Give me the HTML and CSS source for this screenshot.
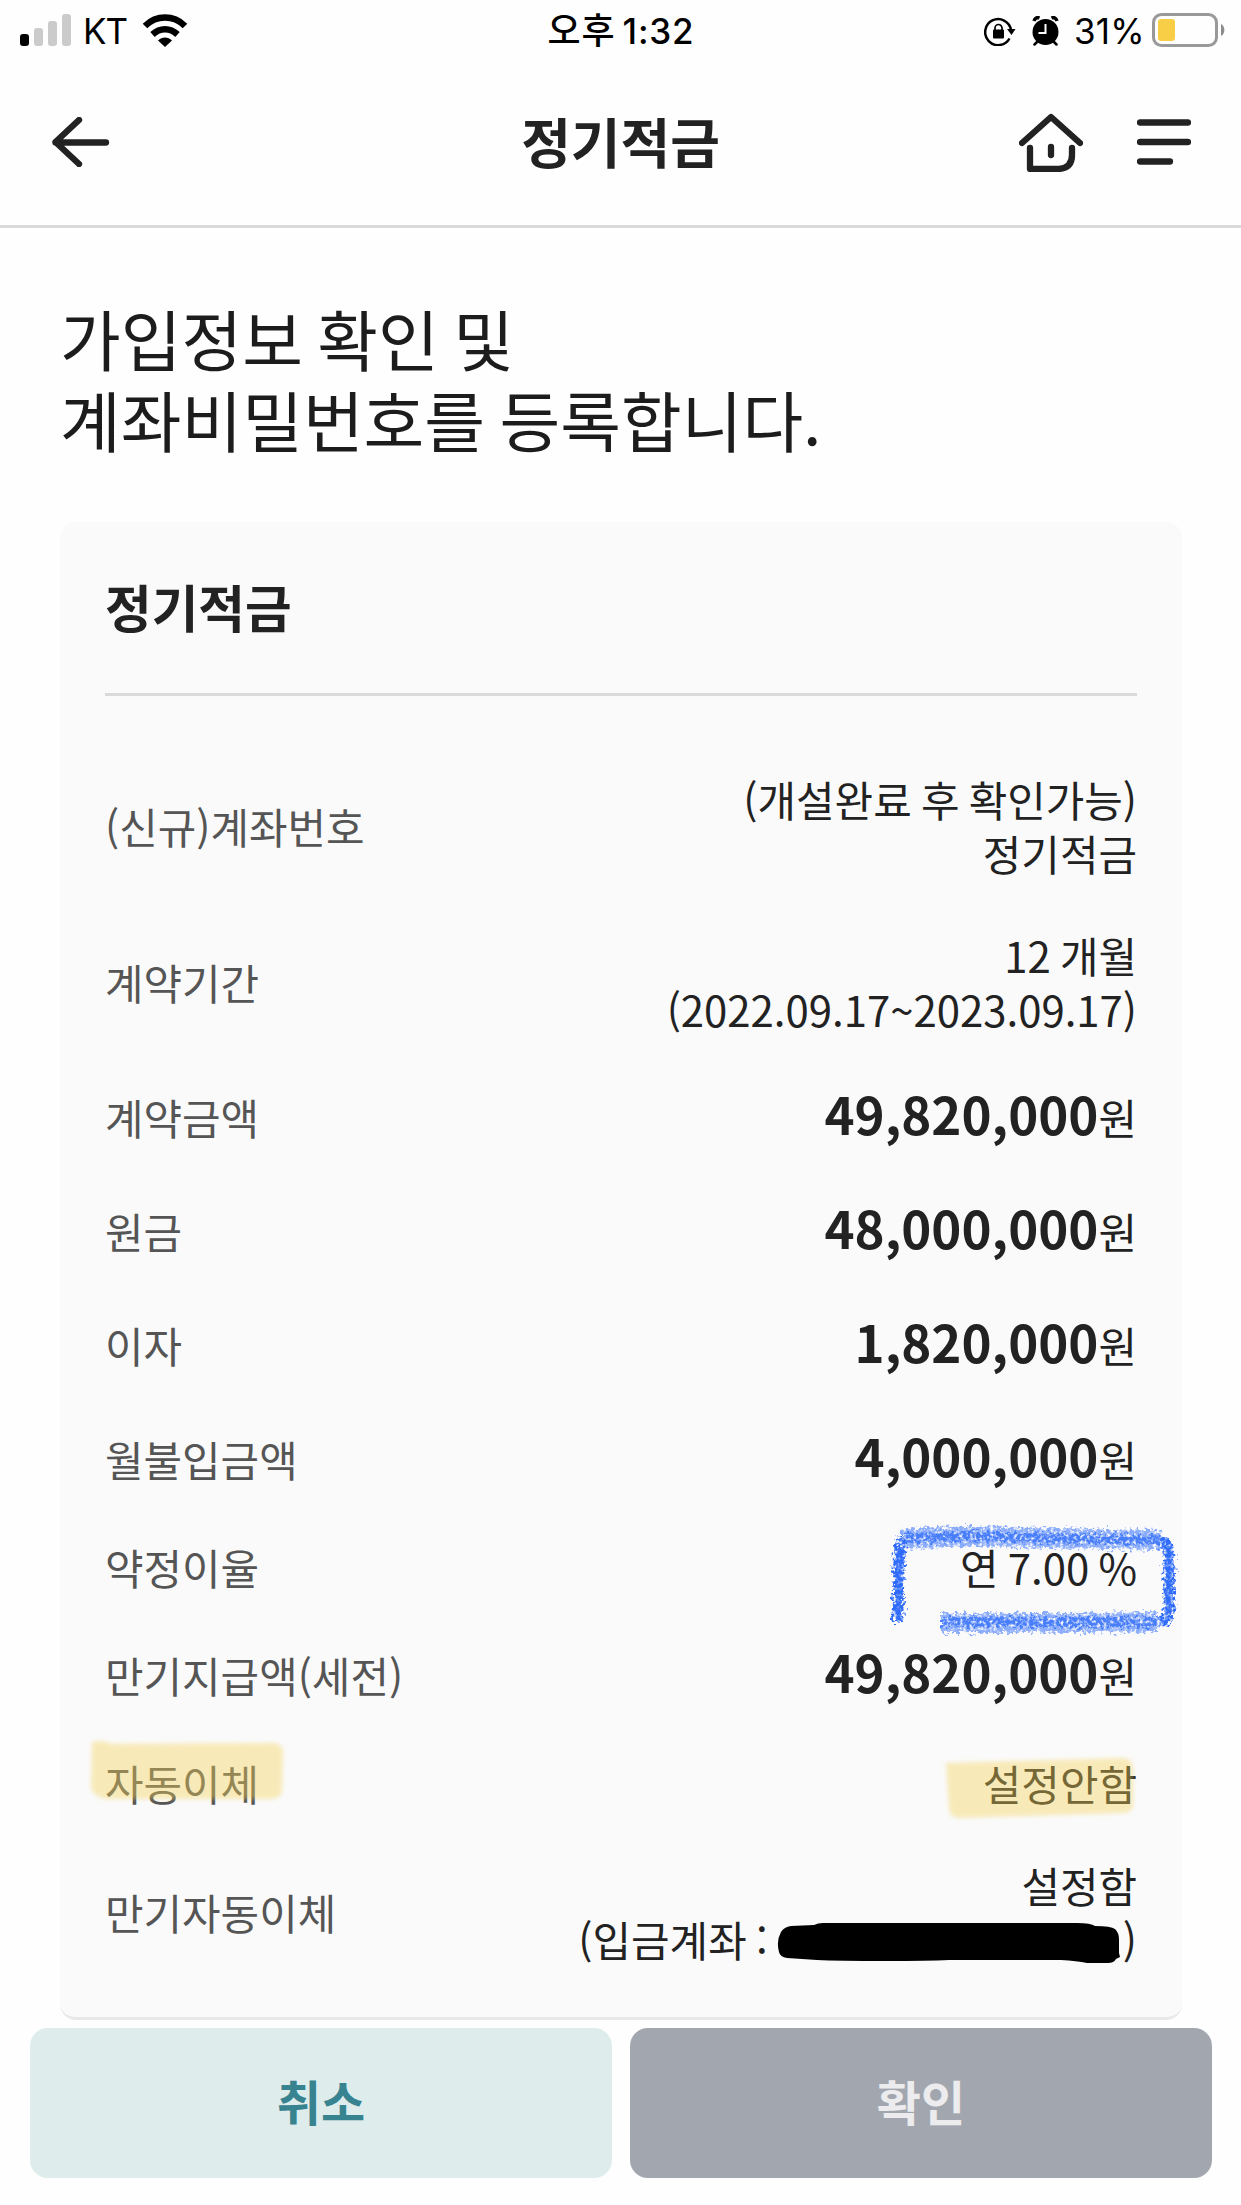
FILE: index.html
```html
<!DOCTYPE html>
<html lang="ko">

<head>
    <meta charset="UTF-8">
    <meta name="viewport" content="width=device-width, initial-scale=1.0">
    <title>정기적금</title>
    <link rel="stylesheet" href="styles.css">
</head>

<body>
    <div class="status-bar">
        <div class="status-left">
            <svg class="signal" width="51" height="32" viewBox="0 0 51 32">
                <rect x="0" y="20" width="9" height="12" rx="3" fill="#000" />
                <rect x="14" y="14" width="9" height="18" rx="3" fill="#cbcbcb" />
                <rect x="28" y="7" width="9" height="25" rx="3" fill="#cbcbcb" />
                <rect x="42" y="0" width="9" height="32" rx="3" fill="#cbcbcb" />
            </svg>
            <span class="carrier">KT</span>
            <svg class="wifi" width="46" height="33" viewBox="0 0 46 33">
                <path d="M3 12C14.500 .8 31.500 .8 43 12" fill="none" stroke="#000" stroke-width="6.500" />
                <path d="M10.500 20.500C18 13.500 28 13.500 35.500 20.500" fill="none" stroke="#000" stroke-width="6.500" />
                <path d="M16 26.500C20 22.500 26 22.500 30 26.500L23 33Z" fill="#000" />
            </svg>
        </div>
        <div class="status-time"><span class="ampm">오후</span> 1:32</div>
        <div class="status-right">
            <svg class="rotate-lock" width="32" height="29" viewBox="0 0 32 29">
                <path d="M25.500 21.500A13 13 0 1 1 27 13" fill="none" stroke="#000" stroke-width="2.500" />
                <path d="M23 12H31.500L27.500 18Z" fill="#000" />
                <rect x="9" y="12.500" width="11" height="9" rx="1" fill="#000" />
                <path d="M11 14V11a3.500 3.500 0 0 1 7 0V14" fill="none" stroke="#000" stroke-width="1.700" />
            </svg>
            <svg class="alarm" width="27" height="30" viewBox="0 0 27 30">
                <circle cx="13.500" cy="16" r="13" fill="#000" />
                <path d="M2 5C3 2 5 1 7.500 2M25 5C24 2 22 1 19.500 2" fill="none" stroke="#000" stroke-width="3.500" />
                <path d="M5 26L2.500 28.500M22 26L24.500 28.500" stroke="#000" stroke-width="2.500" stroke-linecap="round" />
                <path d="M13.500 8V17H6.500" fill="none" stroke="#fff" stroke-width="2" />
            </svg>
            <span class="percent">31%</span>
            <svg class="battery" width="74" height="34" viewBox="0 0 74 34">
                <rect x="1.500" y="1.500" width="63" height="31" rx="8" fill="none" stroke="#999" stroke-width="3" />
                <rect x="6" y="6" width="17" height="22" rx="3" fill="#f7ce46" />
                <path d="M69 11C73.500 13 73.500 21 69 23Z" fill="#8c8c8c" />
            </svg>
        </div>
    </div>

    <header class="header">
        <svg class="back" width="58" height="50" viewBox="0 0 58 50">
            <path d="M27 3L3.500 25L27 47M3.500 25.500H54" />
        </svg>
        <h1 class="header-title">정기적금</h1>
        <div class="header-icons">
            <svg class="home" width="64" height="60" viewBox="0 0 64 60">
                <path d="M3 31L32 5L61 31M11 36V57H40Q53 56 53 43V36M32 35V43" />
            </svg>
            <svg class="menu" width="54" height="46" viewBox="0 0 54 46">
                <path d="M3 3.500H51M3 23H51M3 42.500H33" />
            </svg>
        </div>
    </header>

    <main class="content">
        <h2 class="guide">가입정보 확인 및<br>계좌비밀번호를 등록합니다.</h2>

        <section class="card">
            <h3 class="card-title">정기적금</h3>
            <dl class="list">
                <div class="row">
                    <dt>(신규)계좌번호</dt>
                    <dd>(개설완료 후 확인가능)<br>정기적금</dd>
                </div>
                <div class="row">
                    <dt>계약기간</dt>
                    <dd>12 개월<br>(2022.09.17~2023.09.17)</dd>
                </div>
                <div class="row amount">
                    <dt>계약금액</dt>
                    <dd><strong>49,820,000</strong>원</dd>
                </div>
                <div class="row amount">
                    <dt>원금</dt>
                    <dd><strong>48,000,000</strong>원</dd>
                </div>
                <div class="row amount">
                    <dt>이자</dt>
                    <dd><strong>1,820,000</strong>원</dd>
                </div>
                <div class="row amount">
                    <dt>월불입금액</dt>
                    <dd><strong>4,000,000</strong>원</dd>
                </div>
                <div class="row">
                    <dt>약정이율</dt>
                    <dd>연 7.00 %
                        <svg class="crayon" width="300" height="120" viewBox="0 0 300 120">
                            <defs>
                                <filter id="crayon" filterUnits="userSpaceOnUse" x="0" y="0" width="300" height="120" color-interpolation-filters="sRGB">
                                    <feTurbulence type="fractalNoise" baseFrequency="0.3" numOctaves="2" seed="4" result="noise" />
                                    <feDisplacementMap in="SourceGraphic" in2="noise" scale="12" xChannelSelector="R" yChannelSelector="G" result="rough" />
                                    <feColorMatrix in="noise" type="matrix" values="0 0 0 0 0  0 0 0 0 0  0 0 0 0 0  0 0 3 0 -0.6" result="grain" />
                                    <feComposite in="rough" in2="grain" operator="in" />
                                    <feGaussianBlur stdDeviation="0.6" />
                                </filter>
                            </defs>
                            <g filter="url(#crayon)" fill="none" stroke="#2e6bfa" stroke-linejoin="round">
                                <path d="M15 18L80 15L160 17L274 19" stroke-width="20" stroke-opacity="0.55" />
                                <path d="M54 102H180L270 101" stroke-width="20" stroke-opacity="0.55" />
                                <path d="M16 17L80 15L160 17L266 19Q282 20 282 34V88Q282 101 266 101H54" stroke-width="10" stroke-opacity="0.7" />
                                <path d="M16 18Q12 26 12 44L11 101" stroke-width="11" />
                                <path d="M274 20Q282 24 282 34V88Q282 98 274 101" stroke-width="11" />
                            </g>
                            <path class="crayon-core" d="M14 26Q11 40 11 96M282 30V92" />
                        </svg>
                    </dd>
                </div>
                <div class="row amount">
                    <dt>만기지급액(세전)</dt>
                    <dd><strong>49,820,000</strong>원</dd>
                </div>
                <div class="row">
                    <dt>자동이체
                        <svg class="marker marker-left" width="210" height="76" viewBox="0 0 210 76">
                            <path d="M9 9Q18 6 30 11L190 10Q200 10 200 20L199 58Q197 66 188 66L22 66Q9 62 8 54Z" />
                        </svg>
                    </dt>
                    <dd>설정안함
                        <svg class="marker marker-right" width="204" height="76" viewBox="0 0 204 76">
                            <path d="M4 12L180 7Q190 6 191 18V55Q189 62 181 62L16 67Q8 66 7 58Z" />
                        </svg>
                    </dd>
                </div>
                <div class="row">
                    <dt>만기자동이체</dt>
                    <dd>설정함<br>(입금계좌 : <svg class="masked" width="343" height="40" viewBox="0 0 343 40">
                            <path d="M4 9Q7 4 14 3L37 2Q41 0 46 0H300Q314 0 318 3Q334 3 338 6Q342 10 342 16V30L343 34L339 36Q337 40 331 40H310Q300 38 284 37H172Q150 38 110 38Q60 38 40 37L10 35Q3 34 2 29Q-1 18 4 9Z" />
                        </svg>)</dd>
                </div>
            </dl>
        </section>
    </main>

    <div class="buttons">
        <button type="button" class="btn cancel">취소</button>
        <button type="button" class="btn confirm">확인</button>
    </div>
</body>

</html>
```
FILE: styles.css
```css
* {
    box-sizing: border-box;
}

body {
    margin: 0;
    height: 2205px;
    overflow: hidden;
    background-color: #fefefe;
    color: #222;
    font-family: "Noto Sans CJK KR", sans-serif;
}

h1, h2, h3, dl, dd {
    margin: 0;
}

/* status bar */
.status-bar {
    display: grid;
    grid-template-columns: 1fr auto 1fr;
    align-items: center;
    height: 60px;
    padding: 0 15px 0 20px;
    color: #000;
    font-family: Inter, "Noto Sans CJK KR", sans-serif;
    font-size: 35px;
    line-height: 54px;
}

.status-left,
.status-right {
    display: flex;
    align-items: center;
}

.status-right {
    justify-content: flex-end;
}

.carrier {
    margin: 2px 15px 0 12px;
    letter-spacing: -1px;
}

.status-time {
    padding: 2px 4px 0 0;
    font-weight: 500;
    letter-spacing: 0.8px;
    word-spacing: -3px;
}

.ampm {
    font-size: 36px;
}

.rotate-lock {
    margin: 2px 16px 0 0;
}

.alarm {
    margin: 1px 15px 0 0;
}

.percent {
    margin: 2px 7px 0 0;
    letter-spacing: 0.3px;
}

/* header */
.header {
    display: grid;
    grid-template-columns: 1fr auto 1fr;
    align-items: center;
    height: 168px;
    padding: 0 50px 1px 52px;
    border-bottom: 3px solid #d9dada;
}

.header svg {
    fill: none;
    stroke: #222;
    stroke-width: 6.3;
    stroke-linecap: round;
    stroke-linejoin: round;
}

.header-title {
    padding: 0 2px 3px 0;
    font-size: 54px;
    font-weight: 700;
    line-height: 80px;
}

.header-icons {
    display: flex;
    align-items: center;
    justify-content: flex-end;
    gap: 54px;
}

/* content */
.content {
    padding: 69px 59px 0 60px;
}

.guide {
    height: 225px;
    color: #1c1c1c;
    font-size: 66px;
    font-weight: 400;
    line-height: 81px;
    word-spacing: -4px;
}

.card {
    height: 1498px;
    padding: 0 45px;
    border-bottom: 3px solid #e8e8e8;
    border-radius: 16px;
    background-color: #fafafa;
}

.card-title {
    height: 174px;
    padding-top: 48px;
    border-bottom: 3px solid #d9dada;
    font-size: 50.7px;
    font-weight: 700;
    line-height: 72px;
}

.list {
    display: flex;
    flex-direction: column;
    gap: 48px;
    padding-top: 76px;
    font-size: 41.9px;
    line-height: 54px;
    word-spacing: -2.5px;
}

.row {
    display: flex;
    align-items: center;
    justify-content: space-between;
}

.row dt,
.row dd {
    position: relative;
}

.row dt {
    color: #555;
}

.row dd {
    text-align: right;
}

.amount {
    height: 66px;
}

.amount dd {
    padding-bottom: 4px;
}

.amount strong {
    font-size: 51px;
    font-weight: 700;
}

.masked {
    margin-right: 3px;
    vertical-align: -6px;
}

/* pen marks over the text */
.crayon {
    position: absolute;
    top: -19px;
    right: -50px;
}

.crayon-core {
    fill: none;
    stroke: #2e6bfa;
    stroke-width: 5;
    stroke-opacity: 0.5;
}

.marker {
    position: absolute;
    fill: rgba(245, 210, 85, 0.4);
    filter: blur(2px);
}

.marker-left {
    top: -23px;
    left: -22px;
}

.marker-right {
    top: -5px;
    right: -9px;
}

/* bottom buttons */
.buttons {
    display: flex;
    gap: 18px;
    padding: 8px 29px 0 30px;
}

.btn {
    flex: 1;
    height: 150px;
    padding: 0 0 6px;
    border: 0;
    border-radius: 18px;
    font-family: inherit;
    font-size: 48px;
    font-weight: 700;
}

.cancel {
    background-color: #deecec;
    color: #37838f;
}

.confirm {
    background-color: #a2a7af;
    color: #ececee;
}
```
